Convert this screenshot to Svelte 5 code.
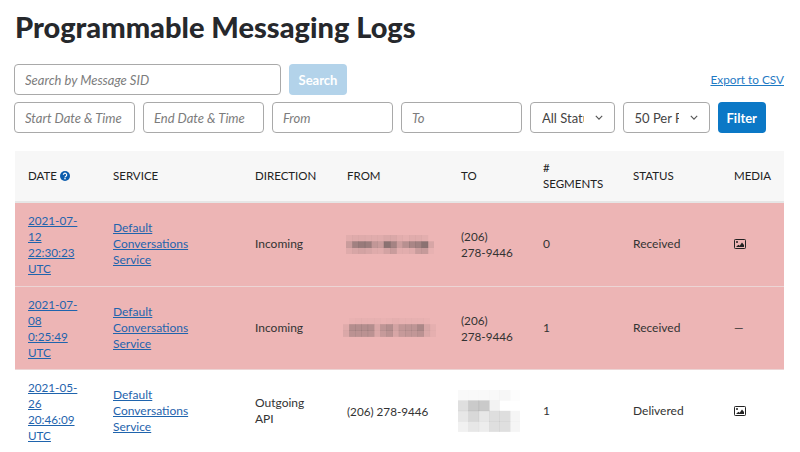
<script>
  const fromA = { cell: 6.3, rows: [
    [.06,.08,.08,.07,.07,.07,.1,.1,.06,.04,.07,.07,.05,0],
    [.2,.42,.48,.45,.24,.2,.55,.4,.18,.3,.38,.42,.55,.12],
    [.08,.12,.14,.12,.08,.07,.14,.2,.06,.06,.08,.2,.22,.03]
  ]};
  const fromB = { cell: 6.2, rows: [
    [0,.02,.03,.03,.03,.03,.02,.03,.04,.03,.03,.03,.03,.02,0],
    [.08,.32,.32,.32,.32,.1,.26,.32,.14,.24,.26,.26,.36,.12,.04],
    [.1,.28,.28,.28,.28,.1,.22,.28,.12,.22,.24,.24,.28,.1,.04]
  ]};
  const toC = { cell: 10.4, rows: [
    [.03,.03,.03,.03,.04,.01],
    [.16,.27,.27,.06,0,0],
    [.12,.2,.12,.17,.17,.05],
    [.07,.12,.09,.16,.16,.05]
  ]};

  const rows = [
    { date: ['2021-07-', '12', '22:30:23', 'UTC'], dir: ['Incoming'], from: fromA, to: ['(206)', '278-9446'], seg: 0, status: 'Received', media: true, failed: true, fromClass: 'm1' },
    { date: ['2021-07-', '08', '0:25:49', 'UTC'], dir: ['Incoming'], from: fromB, to: ['(206)', '278-9446'], seg: 1, status: 'Received', media: false, failed: true, fromClass: 'm2' },
    { date: ['2021-05-', '26', '20:46:09', 'UTC'], dir: ['Outgoing', 'API'], from: '(206) 278-9446', to: toC, seg: 1, status: 'Delivered', media: true, failed: false }
  ];
</script>

{#snippet mosaic(m, cls)}
  <svg class="mosaic {cls}" width={m.rows[0].length * m.cell} height={m.rows.length * m.cell} aria-label="Redacted number">
    {#each m.rows as r, y}
      {#each r as v, x}
        <rect x={x * m.cell} y={y * m.cell} width={m.cell + 0.3} height={m.cell + 0.3} fill="#3a3a3a" fill-opacity={v} />
      {/each}
    {/each}
  </svg>
{/snippet}

{#snippet lines(list)}
  {#each list as l, i}{#if i}<br />{/if}{l}{/each}
{/snippet}

<main class="page">
  <h1>Programmable Messaging Logs</h1>

  <div class="bar first">
    <input class="sid" placeholder="Search by Message SID" />
    <button class="btn off">Search</button>
    <a class="export" href="#export">Export to CSV</a>
  </div>

  <div class="bar second">
    <input class="f" placeholder="Start Date &amp; Time" />
    <input class="f" placeholder="End Date &amp; Time" />
    <input class="f" placeholder="From" />
    <input class="f" placeholder="To" />
    <div class="sel status">
      <select><option>All Statuses</option></select>
      <svg viewBox="0 0 10 6" width="8" height="5"><path d="M1 1l4 4 4-4" fill="none" stroke="#555" stroke-width="1.4" /></svg>
    </div>
    <div class="sel pp">
      <select><option>50 Per Page</option></select>
      <svg viewBox="0 0 10 6" width="8" height="5"><path d="M1 1l4 4 4-4" fill="none" stroke="#555" stroke-width="1.4" /></svg>
    </div>
    <button class="btn on">Filter</button>
  </div>

  <table>
    <colgroup>
      <col class="c1" /><col class="c2" /><col class="c3" /><col class="c4" />
      <col class="c5" /><col class="c6" /><col class="c7" /><col class="c8" />
    </colgroup>
    <thead>
      <tr>
        <th>
          <span class="date-h">DATE
            <svg viewBox="0 0 12 12" width="10" height="10"><circle cx="6" cy="6" r="6" fill="#0b5cad" /><path d="M4 4.6a2 2 0 1 1 3.1 1.7c-.7.4-1.1.7-1.1 1.4" fill="none" stroke="#fff" stroke-width="1.4" /><rect x="5.2" y="8.4" width="1.6" height="1.6" fill="#fff" /></svg>
          </span>
        </th>
        <th>SERVICE</th><th>DIRECTION</th><th>FROM</th><th>TO</th><th>#<br />SEGMENTS</th><th>STATUS</th><th>MEDIA</th>
      </tr>
    </thead>
    <tbody>
      {#each rows as r}
        <tr class:failed={r.failed}>
          <td class="num"><a href="#d">{@render lines(r.date)}</a></td>
          <td><a href="#s">Default<br />Conversations<br />Service</a></td>
          <td>{@render lines(r.dir)}</td>
          <td class="num">
            {#if typeof r.from === 'string'}{r.from}{:else}{@render mosaic(r.from, r.fromClass)}{/if}
          </td>
          <td class="num">
            {#if Array.isArray(r.to)}{@render lines(r.to)}{:else}{@render mosaic(r.to, 'm3')}{/if}
          </td>
          <td>{r.seg}</td>
          <td>{r.status}</td>
          <td>
            {#if r.media}
              <svg class="img" viewBox="0 0 12 10" width="12" height="10">
                <rect x=".5" y=".5" width="11" height="9" rx=".8" fill="none" stroke="#222" />
                <circle cx="3" cy="3" r="1" fill="#222" />
                <path d="M2 8l2.4-2.2 1.3 1L8 3.6 10 6v2z" fill="#222" />
              </svg>
            {:else}—{/if}
          </td>
        </tr>
      {/each}
    </tbody>
  </table>
</main>

<style>
  :global(body) {
    margin: 0;
    background: #fff;
    overflow: hidden;
    height: 452px;
  }
  .page {
    width: 800px;
    height: 452px;
    overflow: hidden;
    box-sizing: border-box;
    padding: 9px 16px 0 14px;
    font-family: Lato, "Open Sans", sans-serif;
    color: #333;
    font-size: 12px;
  }
  h1 {
    margin: 0 0 19px 1px;
    font-size: 29px;
    line-height: 36px;
    font-weight: 900;
    color: #26282c;
  }
  .bar {
    display: flex;
    align-items: center;
    gap: 8px;
  }
  .first { margin-bottom: 7px; }
  .second { margin-bottom: 18px; }
  input, select, .btn {
    box-sizing: border-box;
    height: 31px;
    border-radius: 4px;
    font-family: inherit;
    font-size: 13px;
  }
  input {
    border: 1px solid #a9a9a9;
    padding: 0 10px;
    background: #fff;
    outline: none;
  }
  input::placeholder {
    color: #7c7c7c;
    font-style: italic;
    opacity: 1;
  }
  .sid { width: 267px; }
  .f { width: 121px; }
  .btn {
    border: 0;
    color: #fff;
    font-weight: 700;
    padding: 0;
  }
  .off { background: #b3d3ea; width: 58px; }
  .on { background: #0b78c6; width: 48.5px; }
  .export {
    margin-left: auto;
    color: #1f7ac4;
    font-size: 11.8px;
  }
  .sel { position: relative; }
  .sel select {
    appearance: none;
    width: 100%;
    display: block;
    background: #fff;
    border: 1px solid #a9a9a9;
    padding: 0 30px 0 11px;
    color: #444;
  }
  .status { width: 84.5px; }
  .pp { width: 87px; }
  .sel svg {
    position: absolute;
    right: 12px;
    top: 13px;
    pointer-events: none;
  }
  table {
    width: 769px;
    margin-left: 1px;
    border-collapse: collapse;
    table-layout: fixed;
  }
  .c1 { width: 85px; }
  .c2 { width: 142px; }
  .c3 { width: 92px; }
  .c4 { width: 114px; }
  .c5 { width: 82px; }
  .c6 { width: 90px; }
  .c7 { width: 101px; }
  .c8 { width: 63px; }
  th {
    background: #f7f7f7;
    height: 51px;
    padding: 0 13px;
    box-sizing: border-box;
    text-align: left;
    font-weight: 400;
    font-size: 11.5px;
    line-height: 16px;
    color: #222;
    border-bottom: 2px solid #e6e6e6;
  }
  .date-h svg { vertical-align: -1px; }
  td {
    padding: 9.25px 13px;
    line-height: 16px;
    color: #333;
    border-bottom: 1px solid #ecd5d5;
  }
  .num { font-size: 11.7px; white-space: nowrap; }
  tr.failed td { background: #edb5b5; }
  td a { color: #1f64ad; }
  .mosaic { display: block; }
  .m1 { margin-left: -1px; }
  .m2 { margin-left: -4px; }
  .m3 { margin-left: -3px; }
  .img { display: block; }
</style>
